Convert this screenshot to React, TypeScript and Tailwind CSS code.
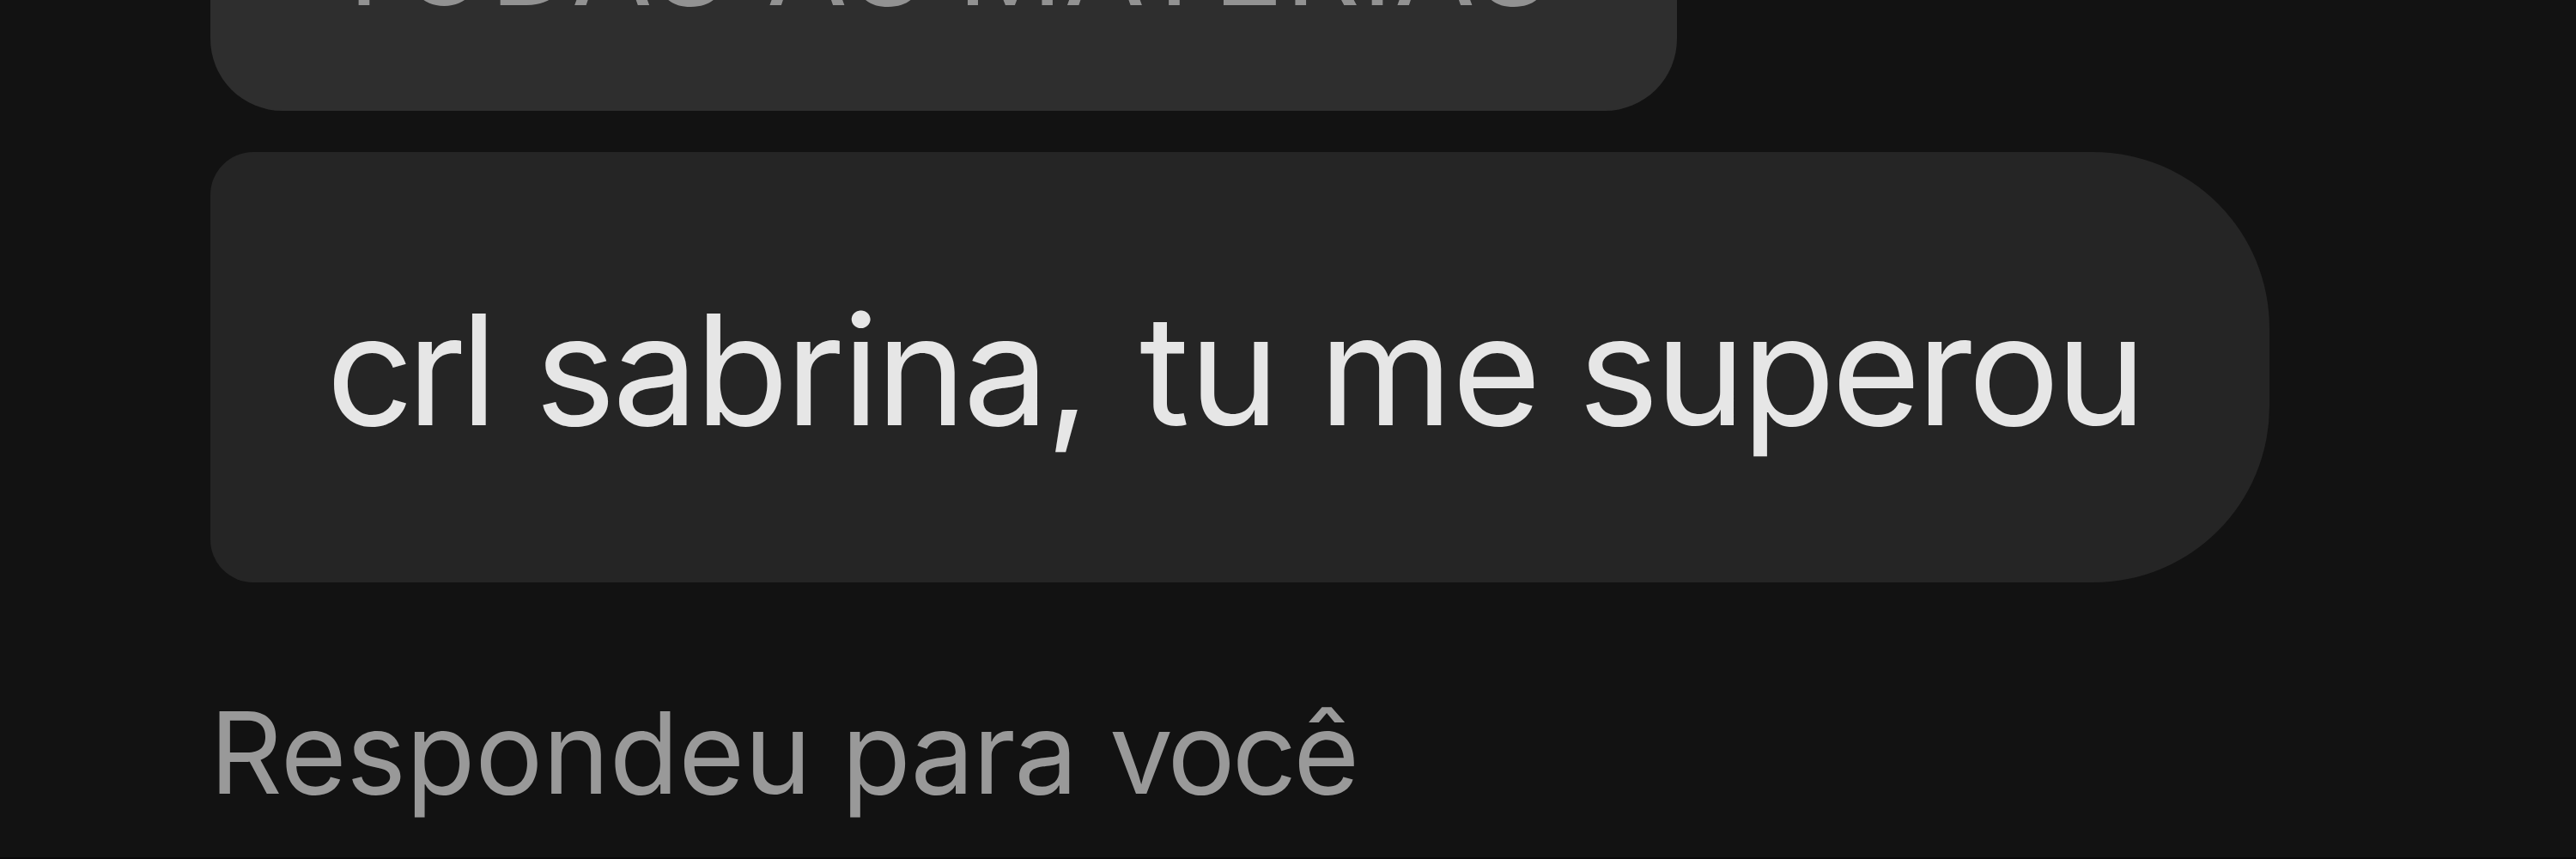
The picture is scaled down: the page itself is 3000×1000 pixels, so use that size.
export default function App() {
  return (
    <main className="flex h-[1000px] w-[3000px] flex-col items-start overflow-hidden border-b-2 border-[#0a090a] bg-[#121212] pl-[245px] font-['Inter',sans-serif] whitespace-nowrap">
      <section className="flex h-[129px] w-[1708px] shrink-0 flex-col justify-end overflow-hidden">
        <div className="flex h-[253px] shrink-0 rounded-[84px] bg-[#2e2e2e] pl-[135px] text-[136px] leading-[162px] text-[#929292]">
          <span className="w-[513px] tracking-[1.5px]">TODAS</span>
          <span className="w-[222px] tracking-[4px]">AS</span>
          <span className="tracking-[1.7px]">MATÉRIAS</span>
        </div>
      </section>

      <section className="mt-12 flex h-[501px] w-[2398px] shrink-0 rounded-l-[50px] rounded-r-[205px] bg-[#252525] pl-[135px] text-[178px] leading-[507px] text-[#e6e6e6]">
        <span className="w-[243px] tracking-[-7.6px]">crl</span>
        <span className="w-[704px] tracking-[-3.7px]">sabrina,</span>
        <span className="w-[209px] tracking-[-0.5px]">tu</span>
        <span className="w-[302px] tracking-[-1px]">me</span>
        <span className="tracking-[-4.4px]">superou</span>
      </section>

      <p className="mt-[118px] -ml-[1px] flex text-[132px] leading-[160px] text-[#999999]">
        <span className="w-[736px] tracking-[-0.3px]">Respondeu</span>
        <span className="w-[312px] tracking-[-1.6px]">para</span>
        <span className="tracking-[-4px]">você</span>
      </p>
    </main>
  );
}
